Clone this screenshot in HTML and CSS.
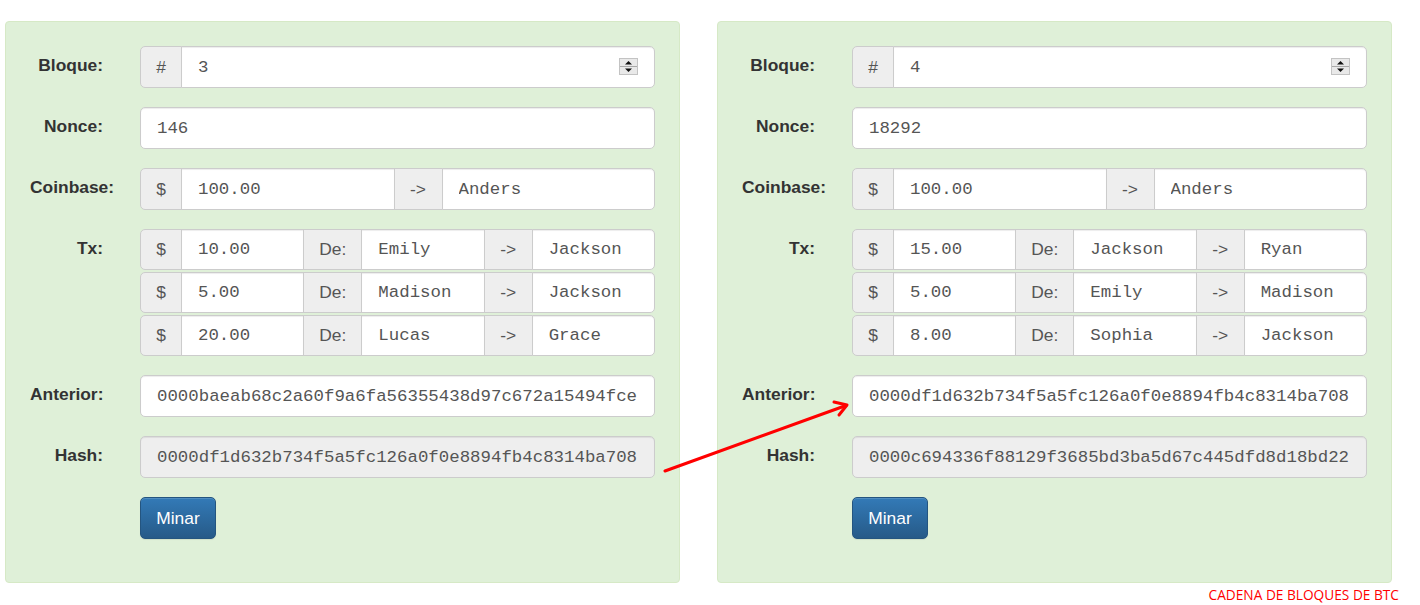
FILE: index.html
```html
<!DOCTYPE html>
<html lang="es">
<head>
<meta charset="utf-8">
<title>Cadena de bloques</title>
<link rel="stylesheet" href="styles.css">
</head>
<body>
<div class="page">
  <div class="chain">
    <section class="block">
      <div class="row">
        <label class="lbl">Bloque:</label>
        <div class="group">
          <span class="addon a-sm">#</span>
          <div class="field">
            <input class="bare" type="text" value="3">
            <svg class="spin" width="19" height="17" viewBox="0 0 19 17"><rect x="0.5" y="0.5" width="18" height="16" fill="#e9e9e9" stroke="#c3c3c3"/><line x1="1" y1="8.5" x2="18" y2="8.5" stroke="#a8a8a8"/><path d="M6 6.5 L9.5 3 L13 6.5 Z" fill="#111"/><path d="M6 10.5 L13 10.5 L9.5 14 Z" fill="#111"/></svg>
          </div>
        </div>
      </div>
      <div class="row">
        <label class="lbl">Nonce:</label>
        <div class="group"><input class="inp" type="text" value="146"></div>
      </div>
      <div class="row">
        <label class="lbl">Coinbase:</label>
        <div class="group">
          <span class="addon a-sm">$</span>
          <input class="inp" type="text" value="100.00">
          <span class="addon a-arr">-&gt;</span>
          <input class="inp" type="text" value="Anders">
        </div>
      </div>
      <div class="row">
        <label class="lbl">Tx:</label>
        <div class="txs">
          <div class="group tx">
            <span class="addon a-sm">$</span><input class="inp" type="text" value="10.00"><span class="addon a-de">De:</span><input class="inp" type="text" value="Emily"><span class="addon a-arr">-&gt;</span><input class="inp" type="text" value="Jackson">
          </div>
          <div class="group tx">
            <span class="addon a-sm">$</span><input class="inp" type="text" value="5.00"><span class="addon a-de">De:</span><input class="inp" type="text" value="Madison"><span class="addon a-arr">-&gt;</span><input class="inp" type="text" value="Jackson">
          </div>
          <div class="group tx">
            <span class="addon a-sm">$</span><input class="inp" type="text" value="20.00"><span class="addon a-de">De:</span><input class="inp" type="text" value="Lucas"><span class="addon a-arr">-&gt;</span><input class="inp" type="text" value="Grace">
          </div>
        </div>
      </div>
      <div class="row">
        <label class="lbl">Anterior:</label>
        <div class="group"><input class="inp" type="text" value="0000baeab68c2a60f9a6fa56355438d97c672a15494fce"></div>
      </div>
      <div class="row">
        <label class="lbl">Hash:</label>
        <div class="group"><input class="inp ro" type="text" readonly value="0000df1d632b734f5a5fc126a0f0e8894fb4c8314ba708"></div>
      </div>
      <div class="row">
        <span></span>
        <button class="btn" type="button">Minar</button>
      </div>
    </section>

    <section class="block">
      <div class="row">
        <label class="lbl">Bloque:</label>
        <div class="group">
          <span class="addon a-sm">#</span>
          <div class="field">
            <input class="bare" type="text" value="4">
            <svg class="spin" width="19" height="17" viewBox="0 0 19 17"><rect x="0.5" y="0.5" width="18" height="16" fill="#e9e9e9" stroke="#c3c3c3"/><line x1="1" y1="8.5" x2="18" y2="8.5" stroke="#a8a8a8"/><path d="M6 6.5 L9.5 3 L13 6.5 Z" fill="#111"/><path d="M6 10.5 L13 10.5 L9.5 14 Z" fill="#111"/></svg>
          </div>
        </div>
      </div>
      <div class="row">
        <label class="lbl">Nonce:</label>
        <div class="group"><input class="inp" type="text" value="18292"></div>
      </div>
      <div class="row">
        <label class="lbl">Coinbase:</label>
        <div class="group">
          <span class="addon a-sm">$</span>
          <input class="inp" type="text" value="100.00">
          <span class="addon a-arr">-&gt;</span>
          <input class="inp" type="text" value="Anders">
        </div>
      </div>
      <div class="row">
        <label class="lbl">Tx:</label>
        <div class="txs">
          <div class="group tx">
            <span class="addon a-sm">$</span><input class="inp" type="text" value="15.00"><span class="addon a-de">De:</span><input class="inp" type="text" value="Jackson"><span class="addon a-arr">-&gt;</span><input class="inp" type="text" value="Ryan">
          </div>
          <div class="group tx">
            <span class="addon a-sm">$</span><input class="inp" type="text" value="5.00"><span class="addon a-de">De:</span><input class="inp" type="text" value="Emily"><span class="addon a-arr">-&gt;</span><input class="inp" type="text" value="Madison">
          </div>
          <div class="group tx">
            <span class="addon a-sm">$</span><input class="inp" type="text" value="8.00"><span class="addon a-de">De:</span><input class="inp" type="text" value="Sophia"><span class="addon a-arr">-&gt;</span><input class="inp" type="text" value="Jackson">
          </div>
        </div>
      </div>
      <div class="row">
        <label class="lbl">Anterior:</label>
        <div class="group"><input class="inp" type="text" value="0000df1d632b734f5a5fc126a0f0e8894fb4c8314ba708"></div>
      </div>
      <div class="row">
        <label class="lbl">Hash:</label>
        <div class="group"><input class="inp ro" type="text" readonly value="0000c694336f88129f3685bd3ba5d67c445dfd8d18bd22"></div>
      </div>
      <div class="row">
        <span></span>
        <button class="btn" type="button">Minar</button>
      </div>
    </section>
  </div>

  <p class="caption">CADENA DE BLOQUES DE BTC</p>

  <svg class="link" width="1420" height="605" viewBox="0 0 1420 605">
    <line x1="665" y1="471" x2="846" y2="405.5" stroke="#ff0000" stroke-width="3" stroke-linecap="round"/>
    <polyline points="834,402 847,405 839,415" fill="none" stroke="#ff0000" stroke-width="3" stroke-linecap="round" stroke-linejoin="round"/>
  </svg>
</div>
</body>
</html>
```

FILE: styles.css
```css
* {
  box-sizing: border-box;
}

html, body {
  margin: 0;
  background: #fff;
}

body {
  font-family: "Liberation Sans", Arial, sans-serif;
  color: #333;
}

.page {
  position: relative;
  width: 1420px;
  height: 605px;
  padding: 21px 0 0 5px;
  overflow: hidden;
}

.chain {
  display: flex;
  gap: 37px;
}

.block {
  width: 675px;
  background: #dff0d8;
  border: 1px solid #d6e9c6;
  border-radius: 4px;
  padding: 24px 24px 43px;
  display: flex;
  flex-direction: column;
  gap: 19px;
}

.row {
  display: grid;
  grid-template-columns: 73px minmax(0, 1fr);
  column-gap: 37px;
  align-items: start;
}

.lbl {
  font-weight: bold;
  font-size: 17.4px;
  line-height: 1.2;
  color: #333;
  text-align: right;
  white-space: nowrap;
  padding-top: 8.5px;
}

.group {
  display: flex;
  height: 42px;
  min-width: 0;
}

.txs {
  display: flex;
  flex-direction: column;
  gap: 2px;
  min-width: 0;
}

.group.tx {
  height: 41px;
}

.group > * + * {
  margin-left: -1px;
}

.group > :first-child {
  border-top-left-radius: 5px;
  border-bottom-left-radius: 5px;
}

.group > :last-child {
  border-top-right-radius: 5px;
  border-bottom-right-radius: 5px;
}

.addon {
  flex: none;
  display: flex;
  align-items: center;
  justify-content: center;
  height: 100%;
  background: #eee;
  border: 1px solid #ccc;
  color: #555;
  font-size: 17.4px;
  font-family: "Liberation Sans", Arial, sans-serif;
}

.a-sm {
  width: 42px;
}

.a-de {
  width: 59px;
}

.a-arr {
  width: 49px;
}

.inp,
.field {
  flex: 1 1 0;
  width: 0;
  min-width: 0;
  height: 100%;
  margin-top: 0;
  margin-bottom: 0;
  border: 1px solid #ccc;
  background: #fff;
  padding: 0 16px;
  box-shadow: inset 0 1px 1px rgba(0, 0, 0, 0.075);
}

.inp,
.bare {
  font-family: "Liberation Mono", "Courier New", monospace;
  font-size: 17.4px;
  color: #555;
  outline: none;
}

.inp.ro {
  background: #eee;
}

.field {
  display: flex;
  align-items: center;
}

.bare {
  flex: 1;
  width: 0;
  min-width: 0;
  border: 0;
  padding: 0;
  margin: 0;
  background: transparent;
  height: 100%;
}

.spin {
  flex: none;
  display: block;
  margin-top: -1px;
}

.btn {
  justify-self: start;
  width: 76px;
  height: 42px;
  padding: 0;
  border: 1px solid #245580;
  border-radius: 5px;
  background: linear-gradient(to bottom, #337ab7 0%, #265a88 100%);
  box-shadow: inset 0 1px 0 rgba(255, 255, 255, 0.15), 0 1px 1px rgba(0, 0, 0, 0.075);
  color: #fff;
  font-family: "Liberation Sans", Arial, sans-serif;
  font-size: 17.4px;
}

.caption {
  margin: 2px 0 0;
  padding-right: 21px;
  text-align: right;
  font-family: "Open Sans", "Noto Sans", sans-serif;
  font-size: 13.7px;
  line-height: 20px;
  color: #ff0000;
}

.link {
  position: absolute;
  top: 0;
  left: 0;
  pointer-events: none;
}
```
